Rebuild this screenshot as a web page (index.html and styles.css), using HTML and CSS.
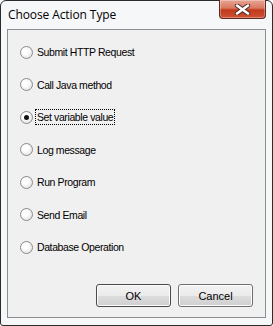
FILE: index.html
```html
<!DOCTYPE html>
<html lang="en">

<head>
    <meta charset="UTF-8">
    <title>Choose Action Type</title>
    <link rel="stylesheet" href="styles.css">
</head>

<body>
    <div class="window">
        <div class="titlebar">
            <span class="title">Choose Action Type</span>
            <div class="close">
                <svg width="17" height="11" viewBox="0 0 17 11">
                    <path d="M3 1.5 L14 9.5 M14 1.5 L3 9.5" stroke="#4a2a26" stroke-width="4.4" stroke-linecap="round" fill="none" />
                    <path d="M3 1.5 L14 9.5 M14 1.5 L3 9.5" stroke="#ffffff" stroke-width="2.6" stroke-linecap="round" fill="none" />
                </svg>
            </div>
        </div>

        <div class="panel">
            <ul class="options">
                <li><span class="radio"></span><span class="label">Submit HTTP Request</span></li>
                <li><span class="radio"></span><span class="label">Call Java method</span></li>
                <li><span class="radio checked"></span><span class="label focus">Set variable value</span></li>
                <li><span class="radio"></span><span class="label">Log message</span></li>
                <li><span class="radio"></span><span class="label">Run Program</span></li>
                <li><span class="radio"></span><span class="label">Send Email</span></li>
                <li><span class="radio"></span><span class="label">Database Operation</span></li>
            </ul>

            <div class="buttons">
                <button class="btn default">OK</button>
                <button class="btn">Cancel</button>
            </div>
        </div>
    </div>
</body>

</html>
```

FILE: styles.css
```css
body {
    margin: 0;
    padding: 0;
    background-color: #ffffff;
    font-family: 'Liberation Sans', Arial, sans-serif;
}

.window {
    width: 273px;
    height: 326px;
    box-sizing: border-box;
    border: 1px solid #2b2b2b;
    border-radius: 6px 6px 3px 3px;
    background-color: #f6f7f8;
    padding: 0 6px 7px 6px;
    display: flex;
    flex-direction: column;
}

.titlebar {
    height: 28px;
    display: flex;
    justify-content: space-between;
    align-items: flex-start;
}

.title {
    font-family: 'Open Sans', sans-serif;
    font-size: 12px;
    letter-spacing: -0.1px;
    color: #000000;
    padding: 5px 0 0 1px;
}

.close {
    width: 47px;
    height: 19px;
    margin-top: -1px;
    box-sizing: border-box;
    border: 1px solid #5c2a22;
    border-top: none;
    border-radius: 0 0 4px 4px;
    background: linear-gradient(#e8a595 0%, #d9795f 45%, #c2391b 55%, #cf5234 100%);
    box-shadow: inset 0 0 0 1px rgba(255, 255, 255, 0.3);
    display: flex;
    align-items: center;
    justify-content: center;
}

.panel {
    flex: 1;
    border: 1px solid #8d8e8f;
    background-color: #f0f0f0;
    display: flex;
    flex-direction: column;
}

.options {
    list-style: none;
    margin: 0;
    padding: 6px 0 0 12px;
}

.options li {
    height: 32.5px;
    display: flex;
    align-items: center;
    font-size: 10.5px;
    letter-spacing: -0.4px;
    color: #000000;
}

.radio {
    width: 11px;
    height: 11px;
    border: 1px solid #8c8c8c;
    border-radius: 50%;
    background: radial-gradient(circle at 40% 40%, #ffffff 30%, #e2e2e2 80%);
    box-sizing: content-box;
    position: relative;
    margin-right: 2px;
}

.radio.checked::after {
    content: "";
    position: absolute;
    left: 3px;
    top: 3px;
    width: 5px;
    height: 5px;
    border-radius: 50%;
    background-color: #111111;
}

.label {
    padding: 1px 1px;
    border: 1px solid transparent;
}

.label.focus {
    border: 1px dotted #000000;
}

.buttons {
    margin-top: auto;
    display: flex;
    justify-content: flex-end;
    gap: 7px;
    padding: 0 12px 10px 0;
}

.btn {
    width: 75px;
    height: 23px;
    font-family: 'Liberation Sans', Arial, sans-serif;
    font-size: 11px;
    color: #000000;
    border: 1px solid #707070;
    border-radius: 3px;
    background: linear-gradient(#f2f2f2 0%, #ebebeb 50%, #dddddd 51%, #cfcfcf 100%);
    box-shadow: inset 0 0 0 1px #fcfcfc;
    padding: 0;
}

.btn.default {
    border-color: #4a4a4a;
}
```
